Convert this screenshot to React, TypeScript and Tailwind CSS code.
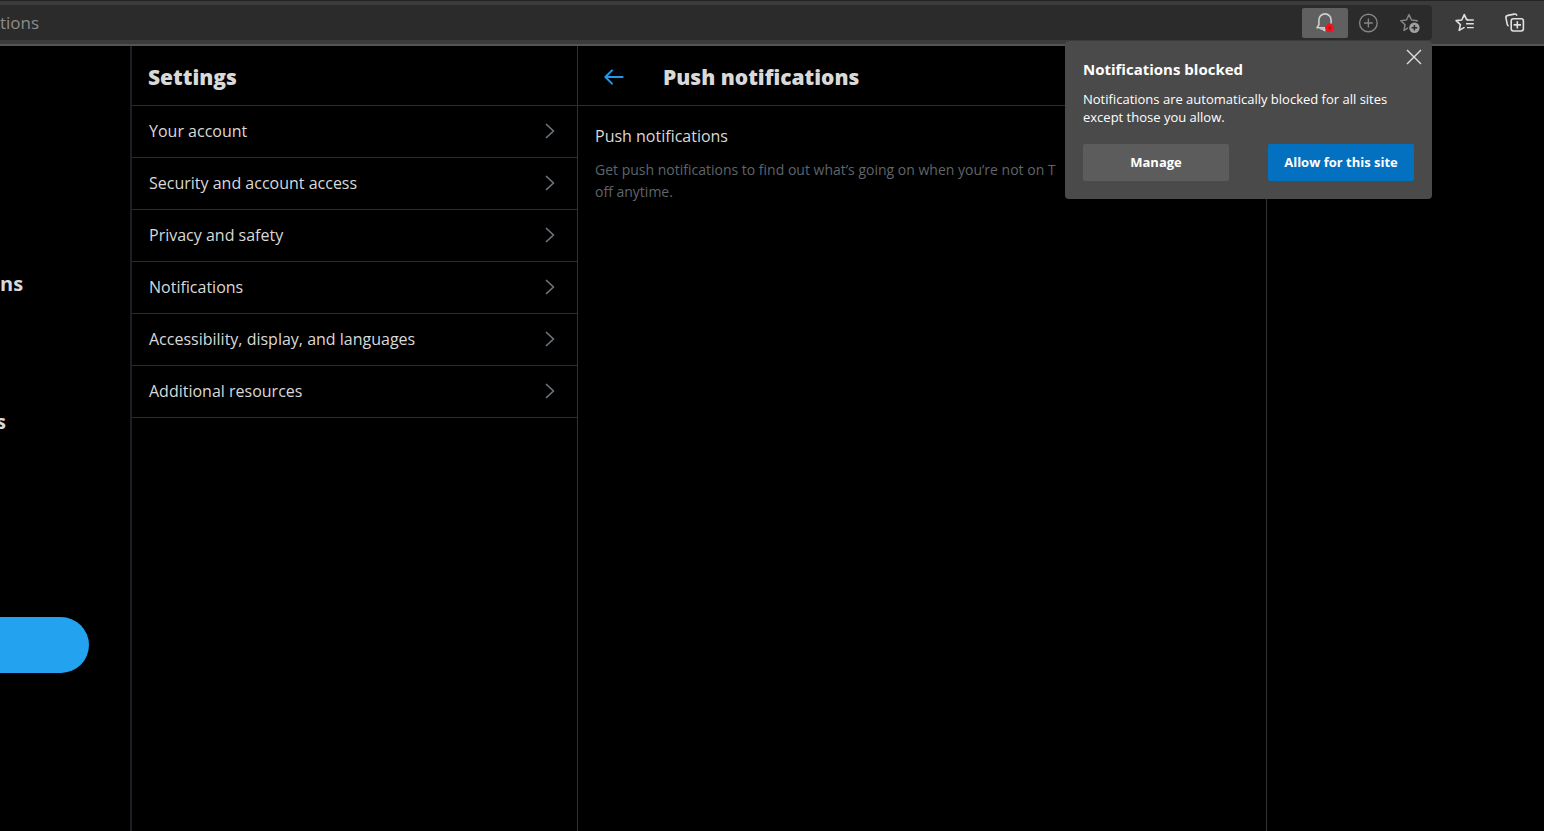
import React from "react";

const sections: string[] = [
  "Your account",
  "Security and account access",
  "Privacy and safety",
  "Notifications",
  "Accessibility, display, and languages",
  "Additional resources",
];

function BellBlockedIcon() {
  return (
    <svg width="22" height="22" viewBox="0 0 22 22" fill="none" aria-hidden="true">
      <path
        d="M11 15.8H3l1.9-3V8A6 6 0 0 1 17.1 8v3.4"
        stroke="#cfcfcf"
        strokeWidth="1.6"
        strokeLinejoin="round"
      />
      <path d="M5.4 16.4l1.4 1.4h1.7l1.3 1.4h1.6v-3z" fill="#cfcfcf" />
      <circle cx="15.8" cy="16" r="2.9" stroke="#f5101c" strokeWidth="2.8" fill="#a8181f" />
    </svg>
  );
}

function PlusCircleIcon() {
  return (
    <svg width="22" height="22" viewBox="0 0 22 22" fill="none" stroke="#858585" strokeWidth="1.4" aria-hidden="true">
      <circle cx="11.4" cy="11" r="8.8" />
      <path d="M11.4 6.6v8.8M7 11h8.8" />
    </svg>
  );
}

const starPath = "M10 2.6l2.5 5.4 5.8.7-4.3 4 1.2 5.7L10 15.4l-5 3 1.1-5.7-4.3-4 5.7-.7z";

function StarAddIcon() {
  return (
    <svg width="22" height="22" viewBox="0 0 22 22" fill="none" aria-hidden="true">
      <path d={starPath} stroke="#858585" strokeWidth="1.5" strokeLinejoin="round" />
      <circle cx="15.4" cy="15.7" r="6.4" fill="#2b2b2b" />
      <circle cx="15.4" cy="15.7" r="5.2" fill="#a0a0a0" />
      <path d="M15.4 12.9v5.6M12.6 15.7h5.6" stroke="#2b2b2b" strokeWidth="1.5" />
    </svg>
  );
}

function FavoritesIcon() {
  return (
    <svg width="22" height="22" viewBox="0 0 22 22" fill="none" stroke="#e0e0e0" strokeWidth="1.6" aria-hidden="true">
      <path
        d="M12.6 7.6L10.3 2.6 7.8 8l-5.7.6 4.3 4L5.2 18.4l4.8-2.8M12.6 7.6h1"
        strokeLinejoin="round"
        strokeLinecap="round"
      />
      <path d="M13 8h6.8M12 11.8h7.8M13 15.6h6.8" strokeWidth="1.4" />
    </svg>
  );
}

function CollectionsIcon() {
  return (
    <svg width="22" height="22" viewBox="0 0 22 22" fill="none" stroke="#e0e0e0" strokeWidth="1.6" aria-hidden="true">
      <path d="M4.6 14a2.6 2.6 0 0 1-1.4-1.8L2 6.2a2.4 2.4 0 0 1 1.9-2.8l6.4-1.3a2.4 2.4 0 0 1 2.7 1.5" />
      <rect x="7.2" y="6.8" width="12.2" height="12.2" rx="2.2" />
      <path d="M13.3 9.2v7.4M9.6 12.9H17" />
    </svg>
  );
}

function BrowserBar() {
  const iconButton = "flex h-8 items-center justify-center";
  return (
    <header className="flex h-[46px] shrink-0 items-start border-t border-b-2 border-t-[#242424] border-b-[#545454] bg-[#3b3b3b] pt-1">
      <div className="flex h-[35px] min-w-0 flex-1 items-center rounded-r bg-[#2b2b2b]">
        <label htmlFor="address" className="sr-only">
          Address
        </label>
        <input
          id="address"
          defaultValue="tions"
          className="h-8 min-w-0 flex-1 bg-transparent text-[17px] text-[#8c8c8c] outline-none"
        />
        <button aria-label="Notifications blocked" className="mr-2 flex h-[30px] w-[46px] items-center justify-center rounded-xs bg-[#606060]">
          <BellBlockedIcon />
        </button>
        <button aria-label="Install" className={`${iconButton} w-6`}>
          <PlusCircleIcon />
        </button>
        <button aria-label="Add to favorites" className={`${iconButton} mr-[10px] ml-[18px] w-6`}>
          <StarAddIcon />
        </button>
      </div>
      <div className="flex w-28 shrink-0 items-center gap-[26px] pt-0.5 pl-[21px]">
        <button aria-label="Favorites" className={`${iconButton} w-6`}>
          <FavoritesIcon />
        </button>
        <button aria-label="Collections" className={`${iconButton} w-6`}>
          <CollectionsIcon />
        </button>
      </div>
    </header>
  );
}

function BlockedPopup() {
  return (
    <div
      role="dialog"
      aria-labelledby="blocked-title"
      className="absolute top-[41px] right-28 w-[367px] rounded bg-[#4a4a4a] px-[18px] pt-[18px] pb-[18px] text-white"
    >
      <button aria-label="Close" className="absolute top-2 right-[10px] flex size-4 items-center justify-center">
        <svg width="16" height="16" viewBox="0 0 16 16" stroke="#e0e0e0" strokeWidth="1.4" aria-hidden="true">
          <path d="M1 1l14 14M15 1L1 15" />
        </svg>
      </button>
      <h2 id="blocked-title" className="text-[15px] leading-5 font-bold">
        Notifications blocked
      </h2>
      <p className="mt-[11px] text-[13px] leading-[18px]">
        Notifications are automatically blocked for all sites
        <br />
        except those you allow.
      </p>
      <div className="mt-[18px] flex justify-between text-[13px] font-bold">
        <button className="h-[37px] w-[146px] rounded-xs bg-[#5c5c5c]">Manage</button>
        <button className="h-[37px] w-[146px] rounded-xs bg-[#0370c0]">Allow for this site</button>
      </div>
    </div>
  );
}

export default function App() {
  return (
    <div className="relative flex min-h-screen flex-col bg-black font-['Open_Sans','Noto_Sans',sans-serif] text-[#d9d9d9]">
      <BrowserBar />
      <div className="flex flex-1">
        <nav className="flex w-[132px] shrink-0 flex-col items-start overflow-hidden border-r-2 border-[#1c1f23] pt-[224px] text-[20px] leading-7 font-bold">
          <a href="#notifications">ns</a>
          <a href="#lists" className="mt-[110px] -ml-1">
            s
          </a>
          <button aria-label="Tweet" className="mt-[181px] h-14 w-[89px] rounded-r-full bg-[#22a2ef]" />
        </nav>

        <section className="w-[446px] shrink-0 border-r border-[#2f3336]">
          <h1 className="flex h-[60px] items-center border-b border-[#2b2e31] px-4 pt-1 text-[21px] font-extrabold">
            Settings
          </h1>
          <ul>
            {sections.map((name) => (
              <li key={name}>
                <a
                  href="#section"
                  className="flex h-[52px] items-center justify-between border-b border-[#2b2e31] pr-[22px] pb-0.5 pl-[17px] text-[16px]"
                >
                  {name}
                  <svg width="10" height="16" viewBox="0 0 10 16" fill="none" stroke="#6e767d" strokeWidth="1.7" strokeLinecap="round" strokeLinejoin="round" aria-hidden="true">
                    <path d="M1.5 1.5L8.5 8l-7 6.5" />
                  </svg>
                </a>
              </li>
            ))}
          </ul>
        </section>

        <main className="min-w-0 max-w-[689px] flex-1 border-r border-[#2f3336]">
          <div className="flex h-[60px] items-center gap-[39px] border-b border-[#2b2e31] px-[26px] pt-1">
            <button aria-label="Back" className="flex size-5 items-center">
              <svg width="20" height="18" viewBox="0 0 20 18" fill="none" stroke="#1d9bf0" strokeWidth="2" strokeLinecap="round" strokeLinejoin="round" aria-hidden="true">
                <path d="M18.6 8H1.6M8 1.4L1.4 8 8 14.6" />
              </svg>
            </button>
            <h2 className="text-[21px] font-extrabold">Push notifications</h2>
          </div>
          <div className="px-[17px] pt-[18px]">
            <h3 className="text-[16px] leading-6">Push notifications</h3>
            <p className="mt-[11px] text-[14px] leading-[22px] text-[#5f656a]">
              Get push notifications to find out what’s going on when you’re not on T
              <br />
              off anytime.
            </p>
          </div>
        </main>
      </div>
      <BlockedPopup />
    </div>
  );
}
